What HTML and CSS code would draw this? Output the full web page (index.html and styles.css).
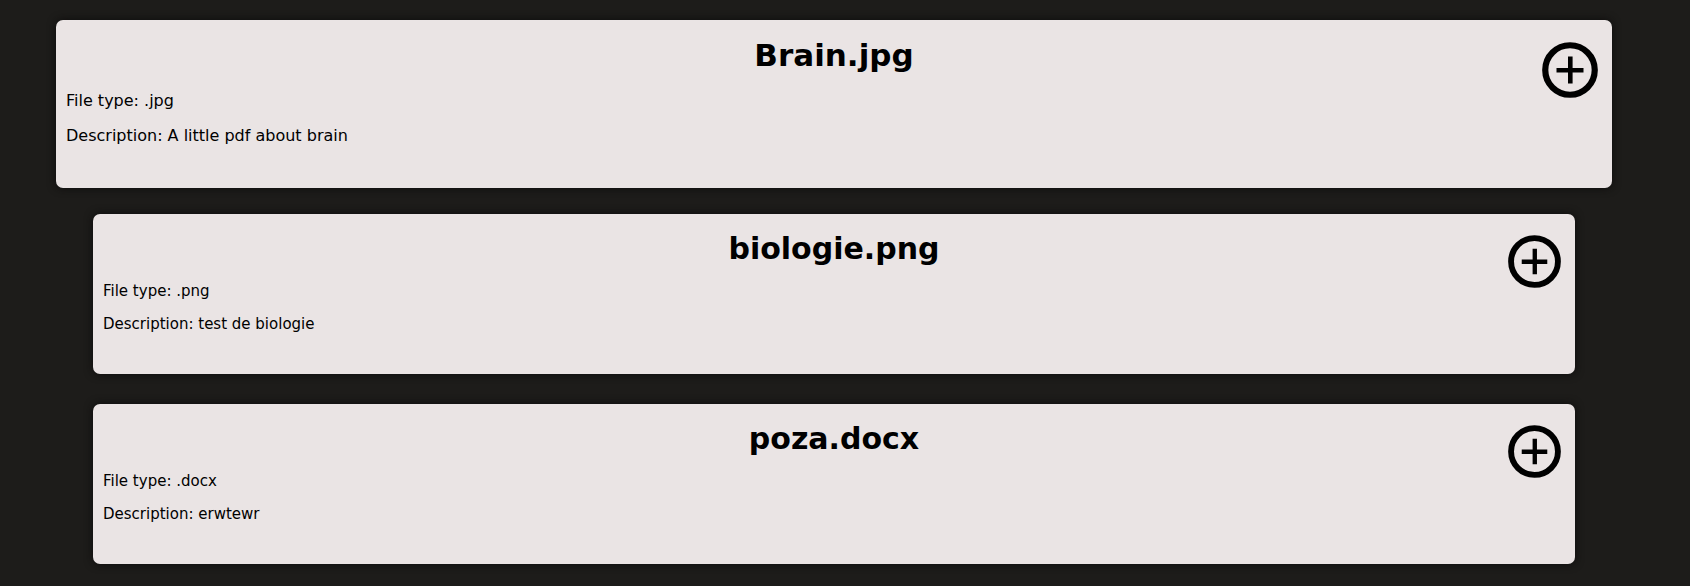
FILE: index.html
```html
<!DOCTYPE html>
<html lang="en">
<head>
<meta charset="utf-8">
<title>Files</title>
<link rel="stylesheet" href="styles.css">
</head>
<body>
<svg class="symbols" aria-hidden="true">
  <symbol id="plus" viewBox="0 0 56 56">
    <circle cx="28" cy="28" r="24.75" fill="none" stroke="#000" stroke-width="6.2"/>
    <path d="M14.5 28.3h27M28.3 14.5v27" fill="none" stroke="#000" stroke-width="4.6"/>
  </symbol>
</svg>
<main class="files">
  <article class="card card-active">
    <h1 class="title">Brain.jpg</h1>
    <p class="detail">File type: .jpg</p>
    <p class="detail">Description: A little pdf about brain</p>
    <button class="add" type="button" aria-label="Add Brain.jpg"><svg class="icon"><use href="#plus"/></svg></button>
  </article>
  <article class="card">
    <h1 class="title">biologie.png</h1>
    <p class="detail">File type: .png</p>
    <p class="detail">Description: test de biologie</p>
    <button class="add" type="button" aria-label="Add biologie.png"><svg class="icon"><use href="#plus"/></svg></button>
  </article>
  <article class="card">
    <h1 class="title">poza.docx</h1>
    <p class="detail">File type: .docx</p>
    <p class="detail">Description: erwtewr</p>
    <button class="add" type="button" aria-label="Add poza.docx"><svg class="icon"><use href="#plus"/></svg></button>
  </article>
</main>
</body>
</html>
```
FILE: styles.css
```css
body {
  margin: 0;
  background: #1d1c1a;
  color: #000;
  font-family: Verdana, "DejaVu Sans", sans-serif;
}

.symbols {
  display: none;
}

.files {
  display: flex;
  flex-direction: column;
  padding: 20px 78px 22px 56px;
}

.card {
  position: relative;
  box-sizing: border-box;
  margin: 0 37px 30px;
  padding: 16px 10px 41px;
  border-radius: 7px;
  background: #eae4e4;
  box-shadow: 0 0 8px #0c0b0b;
}

.card:last-child {
  margin-bottom: 0;
}

.card-active {
  margin: 0 0 26px;
  padding: 16px 10px 42px;
}

.title {
  margin: 0 0 15px;
  font-size: 30px;
  line-height: 37px;
  font-weight: bold;
  text-align: center;
}

.detail {
  margin: 0 0 15px;
  font-size: 15px;
  line-height: 18px;
}

.detail:last-of-type {
  margin-bottom: 0;
}

.card-active .title {
  margin-bottom: 16px;
  font-size: 31px;
  line-height: 39px;
}

.card-active .detail {
  font-size: 16px;
  line-height: 20px;
}

.add {
  position: absolute;
  top: 21px;
  right: 14px;
  width: 53px;
  height: 53px;
  padding: 0;
  border: 0;
  background: none;
  cursor: pointer;
}

.card-active .add {
  top: 22px;
  width: 56px;
  height: 56px;
}

.icon {
  display: block;
  width: 100%;
  height: 100%;
}
```
